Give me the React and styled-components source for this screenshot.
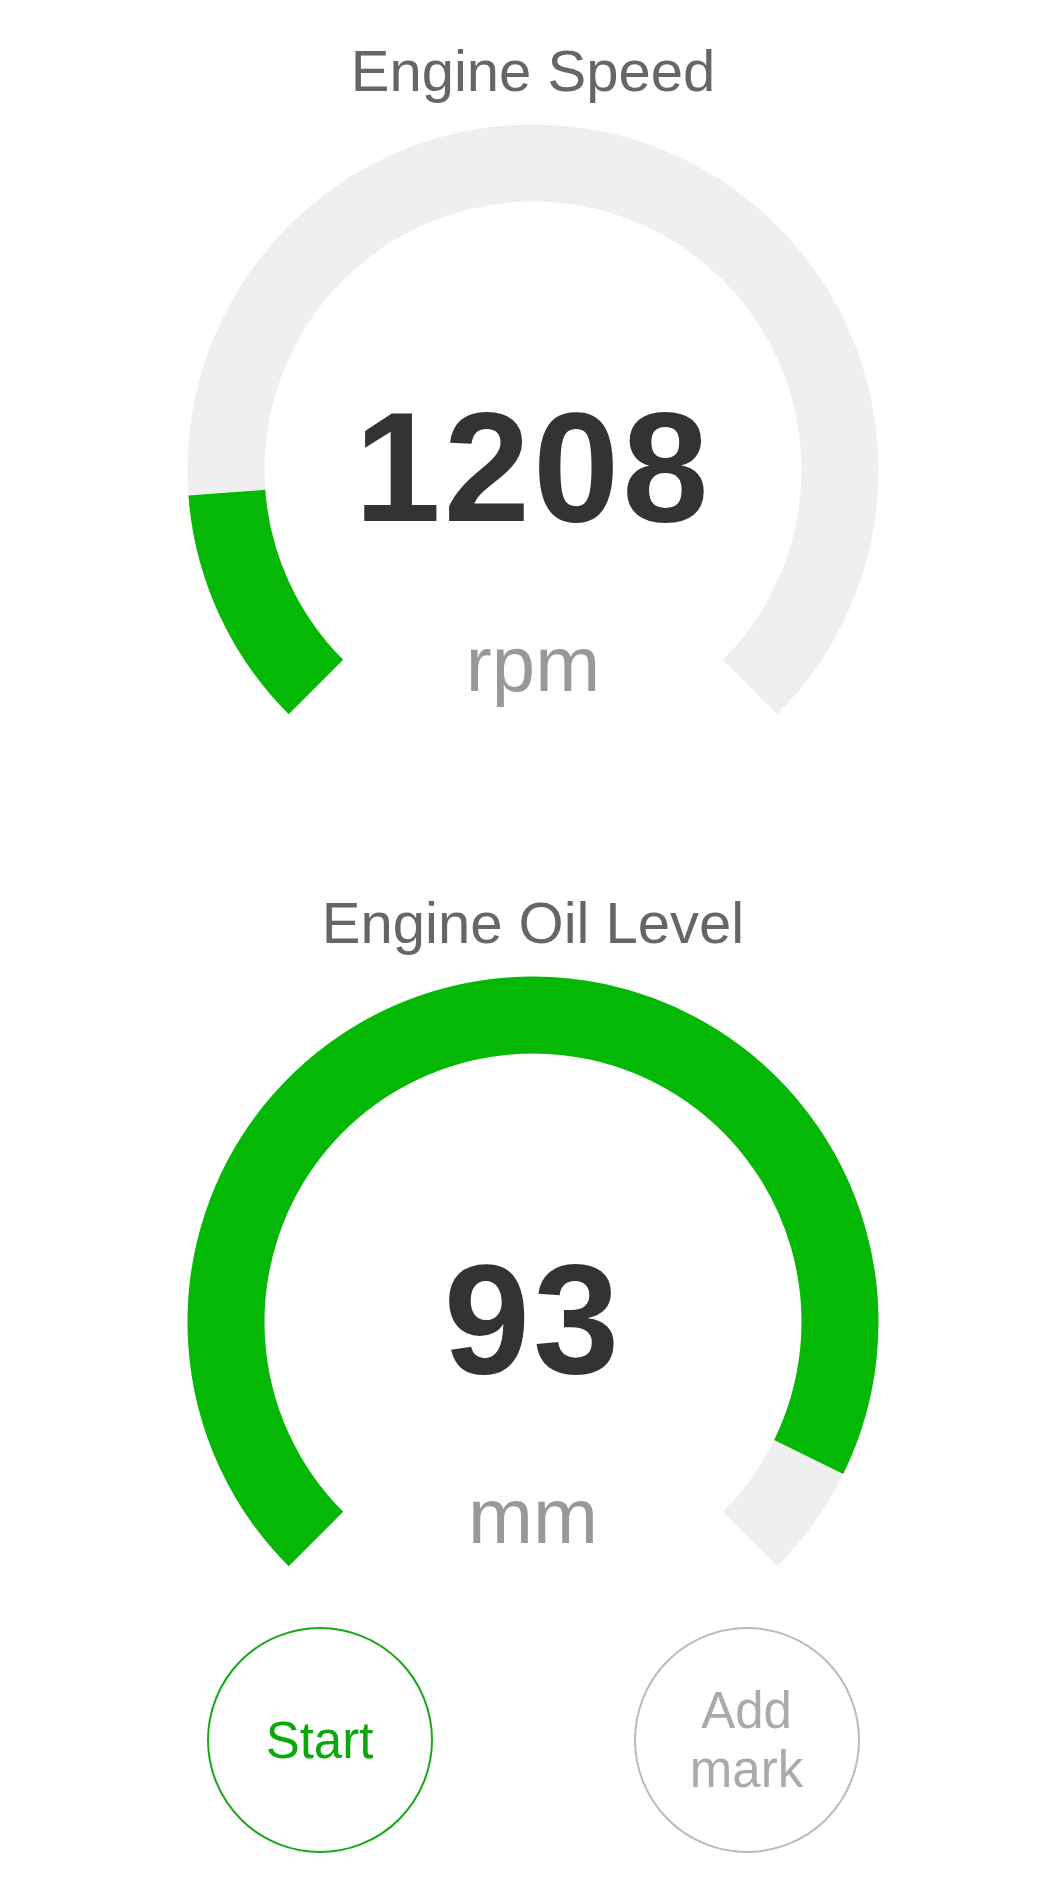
import React from 'react'
import styled, { createGlobalStyle } from 'styled-components'

const GREEN = '#06b806'
const TRACK = '#efefef'

const GlobalStyle = createGlobalStyle`
  html, body {
    margin: 0;
    padding: 0;
    background: #fff;
  }
  body {
    font-family: "Liberation Sans", Arial, Helvetica, sans-serif;
  }
`

const gauges = [
  { title: 'Engine Speed', value: 1208, max: 8000, unit: 'rpm' },
  { title: 'Engine Oil Level', value: 93, max: 100, unit: 'mm' },
]

// arc geometry, angles in screen degrees (y down, clockwise)
const SIZE = 700
const CX = 350
const CY = 350
const R = 307
const STROKE = 77
const START = 135
const SWEEP = 270

const point = (deg) => {
  const a = (deg * Math.PI) / 180
  return [CX + R * Math.cos(a), CY + R * Math.sin(a)]
}

const arcPath = (from, to) => {
  const [x0, y0] = point(from)
  const [x1, y1] = point(to)
  const large = to - from > 180 ? 1 : 0
  return `M ${x0} ${y0} A ${R} ${R} 0 ${large} 1 ${x1} ${y1}`
}

const Gauge = ({ title, value, max, unit }) => {
  const end = START + SWEEP * Math.min(value / max, 1)
  return (
    <Section>
      <Title>{title}</Title>
      <GaugeBox>
        <svg width={SIZE} height={600} viewBox={`0 0 ${SIZE} 600`}>
          <path d={arcPath(START, START + SWEEP)} fill="none" stroke={TRACK} strokeWidth={STROKE} />
          <path d={arcPath(START, end)} fill="none" stroke={GREEN} strokeWidth={STROKE} />
        </svg>
        <Readout>
          <Value>{value}</Value>
          <Unit>{unit}</Unit>
        </Readout>
      </GaugeBox>
    </Section>
  )
}

const App = () => {
  return (
    <Page>
      <GlobalStyle />
      {gauges.map((g) => (
        <Gauge key={g.title} {...g} />
      ))}
      <ButtonRow>
        <RoundButton $tone="green">Start</RoundButton>
        <RoundButton $tone="gray">
          Add
          <br />
          mark
        </RoundButton>
      </ButtonRow>
    </Page>
  )
}

const Page = styled.div`
  box-sizing: border-box;
  width: 100%;
  min-height: 1900px;
  padding: 37px 0 0 9px;
  display: flex;
  flex-direction: column;
  align-items: center;
`

const Section = styled.div`
  display: flex;
  flex-direction: column;
  align-items: center;

  & + & {
    margin-top: 169px;
  }
`

const Title = styled.div`
  font-size: 58px;
  line-height: 68px;
  color: #666;
`

const GaugeBox = styled.div`
  margin-top: 15px;
  display: grid;
  width: ${SIZE}px;
  height: 600px;

  & > * {
    grid-area: 1 / 1;
  }
  svg {
    display: block;
  }
`

const Readout = styled.div`
  display: flex;
  flex-direction: column;
  align-items: center;
  padding-top: 270px;
`

const Value = styled.div`
  font-size: 155px;
  line-height: 155px;
  font-weight: 700;
  color: #333;
  letter-spacing: 3px;
`

const Unit = styled.div`
  margin-top: 80px;
  font-size: 78px;
  line-height: 78px;
  color: #999;
`

const ButtonRow = styled.div`
  margin-top: 55px;
  width: 653px;
  display: flex;
  justify-content: space-between;
`

const RoundButton = styled.button`
  box-sizing: border-box;
  width: 226px;
  height: 226px;
  border-radius: 50%;
  background: #fff;
  padding: 0;
  display: flex;
  align-items: center;
  justify-content: center;
  font-family: "Liberation Sans", Arial, sans-serif;
  font-size: 51px;
  line-height: 59px;
  border: 2px solid ${(p) => (p.$tone === 'green' ? '#18a818' : '#bbb')};
  color: ${(p) => (p.$tone === 'green' ? '#0aa80a' : '#aaa')};
  cursor: pointer;
`

export default App
